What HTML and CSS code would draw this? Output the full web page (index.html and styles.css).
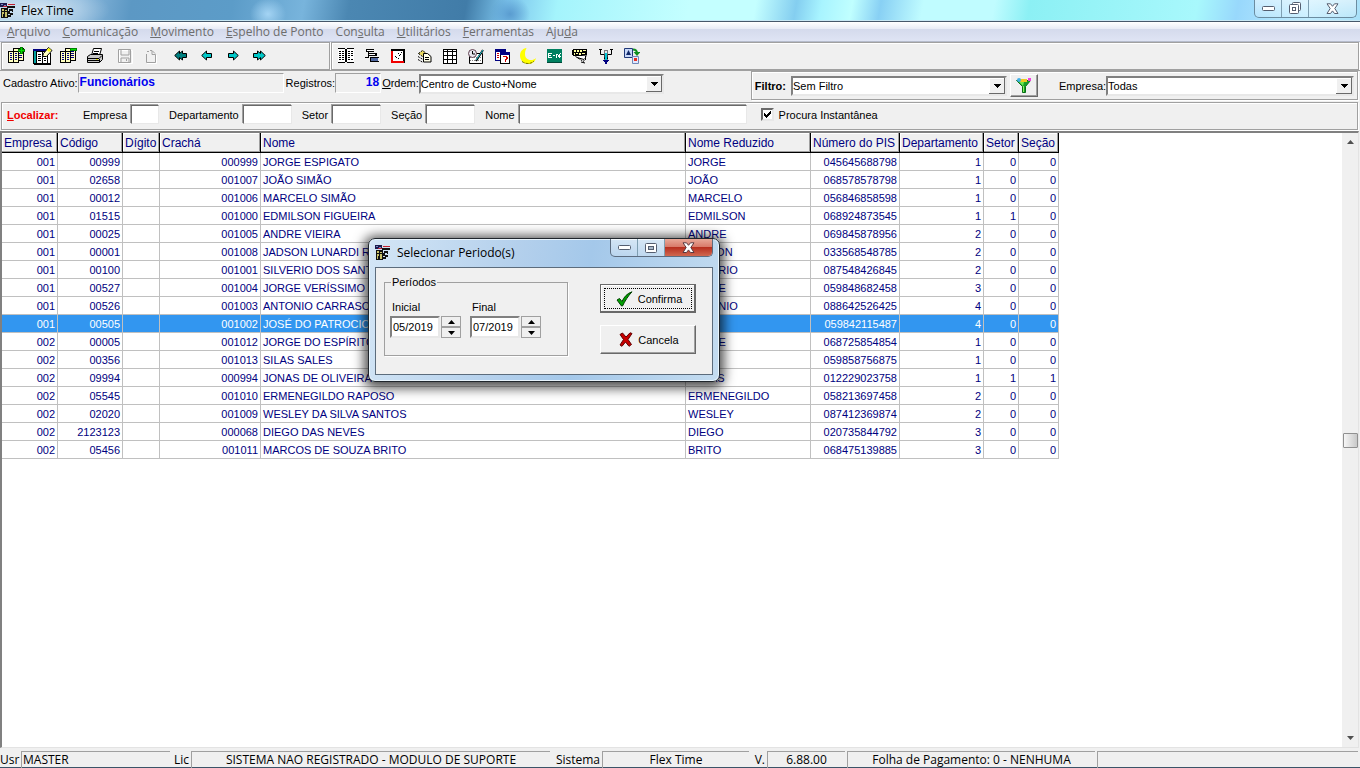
FILE: index.html
```
<!DOCTYPE html>
<html lang="pt-BR">
<head>
    <meta charset="UTF-8">
    <meta name="viewport" content="width=device-width, initial-scale=1.0">
    <title>Flex Time</title>
    <link rel="stylesheet" href="styles.css">
</head>
<body>
    <!-- Shared symbols -->
    <svg class="symbols" width="0" height="0" aria-hidden="true">
        <symbol id="appIcon" viewBox="0 0 16 16">
            <path fill="#1b1b4d" d="M0 0h7v4H0z"/>
            <path fill="#7d88c4" d="M1 1h2v1H1zM4 2h2v1H4z"/>
            <path fill="#d8dce8" d="M7 0h5v5H7z"/>
            <path fill="#c02030" d="M8 1h7v1H8zM3 3h4v1H3z"/>
            <path fill="#111" d="M7 3h8v2H7zM1 5h7v10H1zM9 6h3v2H9zM8 8h2v3H8zM10 10h3v2h-3zM8 12h3v2H8zM12 6h1v3h-1z"/>
            <path fill="#c9c36a" d="M2 6h2v8H2zM5 7h2v7H5z"/>
            <path fill="#111" d="M2 8h5v1H2zM3 11h1v3H3z"/>
        </symbol>
        <symbol id="pages" viewBox="0 0 18 18">
            <path fill="#000" d="M5 1h11v13H5z"/>
            <path fill="#ffffc0" d="M6 2h9v11H6z"/>
            <path fill="#000080" d="M7 4h3v1H7zM11 4h3v1h-3zM11 6h3v1h-3zM11 8h3v1h-3zM11 10h3v1h-3z"/>
            <path fill="#000" d="M0 4h11v12H0z"/>
            <path fill="#ffffc0" d="M1 5h4v10H1zM6 5h4v10H6z"/>
            <path fill="#000080" d="M2 6h2v1H2zM2 8h2v1H2zM2 10h2v1H2zM2 12h2v1H2zM7 6h2v1H7zM7 8h2v1H7zM7 10h2v1H7zM7 12h2v1H7z"/>
        </symbol>
        <symbol id="arrow" viewBox="0 0 12 12">
            <path fill="#00c8c8" stroke="#000" d="M.7 5.500L5.500 1V3.500H10.500V7.500H5.500V10z"/>
        </symbol>
    </svg>

    <div class="titlebar">
        <svg class="app-icon" width="16" height="16"><use href="#appIcon"/></svg>
        <span class="title">Flex Time</span>
        <div class="window-buttons">
            <button type="button" aria-label="Minimizar"><svg width="13" height="6"><rect x=".5" y=".5" width="12" height="4" rx="1" fill="#fff" stroke="#555e70"/></svg></button>
            <button type="button" aria-label="Restaurar"><svg width="13" height="13" fill="#fff" stroke="#555e70"><rect x="3.500" y=".5" width="8" height="8" rx="1"/><rect x=".5" y="2.500" width="9" height="9" rx="1"/><rect x="3.500" y="5.500" width="3" height="3"/></svg></button>
            <button type="button" class="wide" aria-label="Fechar"><svg width="13" height="12"><path fill="#fff" stroke="#555e70" d="M1 .8h3.500l2 2.500 2-2.500H12L8.800 5.500 12 10.500H8.500l-2-2.600-2 2.600H1l3.200-5z"/></svg></button>
        </div>
    </div>

    <nav class="menubar">
        <button type="button"><u>A</u>rquivo</button>
        <button type="button"><u>C</u>omunicação</button>
        <button type="button"><u>M</u>ovimento</button>
        <button type="button"><u>E</u>spelho de Ponto</button>
        <button type="button">Con<u>s</u>ulta</button>
        <button type="button"><u>U</u>tilitários</button>
        <button type="button"><u>F</u>erramentas</button>
        <button type="button">Aju<u>d</u>a</button>
    </nav>

    <div class="toolbars">
        <div class="toolbar toolbar-edit">
            <button type="button" aria-label="Incluir">
                <svg width="18" height="18"><use href="#pages"/><path fill="#008000" d="M12 0h3v7h-3zM10 2h7v3h-7z"/><path fill="#00e000" d="M13 1h1v5h-1zM11 3h5v1h-5z"/></svg>
            </button>
            <button type="button" aria-label="Alterar">
                <svg width="20" height="18" viewBox="0 0 20 18"><path fill="#000" d="M0 2h14v4h4v12H1v-1H0z"/><path fill="#00a0a0" d="M1 4h2v12H1z"/><path fill="#fff" d="M4 5h13v11H4z"/><path fill="#000080" d="M0 2h13v2H0z"/><path fill="#000" d="M5 7h3v1H5zM5 9h3v1H5zM5 11h3v1H5zM5 13h3v1H5zM9 5h1v11H9zM11 11h2v1h-2zM11 13h2v1h-2zM14 5h1v11h-1z"/><path fill="#ffffc0" stroke="#000" d="M9.500 9.500l1-3 5-6 3.500 3-5.500 6z"/><path fill="#ff0" d="M14 3l2-2 2 2-2 2z"/></svg>
            </button>
            <button type="button" aria-label="Excluir">
                <svg width="18" height="18"><use href="#pages"/><path fill="#008000" d="M10 1h7v3h-7z"/><path fill="#00e000" d="M11 2h5v1h-5z"/></svg>
            </button>
            <button type="button" aria-label="Imprimir">
                <svg width="18" height="16" viewBox="0 0 18 16"><path fill="#fff" stroke="#000" d="M5.500 7.500l2-7h8l-2 7z"/><path stroke="#000" d="M8 3.500h5M7 5.500h5"/><path fill="#c8c8c8" stroke="#000" d="M1.500 8.500l3-2h12v5l-3 3h-12z"/><path fill="none" stroke="#000" d="M2 10.500h11l3-3M13.500 11v3M2 12.500h11"/><path fill="#e0e000" d="M10 11h2v1h-2z"/></svg>
            </button>
            <button type="button" class="group-start" aria-label="Salvar" disabled>
                <svg width="16" height="16"><path fill="none" stroke="#fff" d="M2.500 2.500h13v13h-13z"/><path fill="none" stroke="#a0a0a0" d="M1.500 1.500h12v13h-12zM4 2v5h8V2M4 14v-4h8v4M9.500 11v2"/></svg>
            </button>
            <button type="button" aria-label="Cancelar" disabled>
                <svg width="16" height="16"><path fill="none" stroke="#fff" d="M4 15.500h9.500V7"/><path fill="none" stroke="#a0a0a0" d="M3.500 6v8.500h9V6.500H9V3M4 3.500h2M7 2.500h2l3 3"/></svg>
            </button>
            <button type="button" class="group-start" aria-label="Primeiro">
                <svg width="14" height="12"><path fill="#008080" stroke="#000" d="M.7 5.500L5.500 1V3.500L8.500 1V3.500H12.500V7.500H8.500V10L5.500 7.500V10z"/></svg>
            </button>
            <button type="button" aria-label="Anterior">
                <svg width="12" height="12"><use href="#arrow"/></svg>
            </button>
            <button type="button" aria-label="Próximo">
                <svg class="flip" width="12" height="12"><use href="#arrow"/></svg>
            </button>
            <button type="button" aria-label="Último">
                <svg class="flip" width="14" height="12"><path fill="#00c8c8" stroke="#000" d="M.7 5.500L5.500 1V3.500L8.500 1V3.500H12.500V7.500H8.500V10L5.500 7.500V10z"/></svg>
            </button>
        </div>
        <div class="toolbar toolbar-main">
            <button type="button" aria-label="Espelho">
                <svg width="16" height="16"><path fill="#fff" d="M0 1h16v13H0z"/><path fill="#000" d="M0 0h7v1H0zM9 0h7v1H9zM7 1h2v13H7zM0 14h7v1H0zM9 14h7v1H9zM1 3h2v1H1zM4 3h2v1H4zM1 5h2v1H1zM4 5h2v1H4zM1 7h2v1H1zM4 7h2v1H4zM1 9h2v1H1zM4 9h2v1H4zM1 11h2v1H1zM4 11h2v1H4zM10 3h2v1h-2zM13 3h2v1h-2zM10 5h2v1h-2zM13 5h2v1h-2zM10 7h2v1h-2zM13 7h2v1h-2zM10 9h2v1h-2zM10 11h2v1h-2zM13 11h2v1h-2z"/></svg>
            </button>
            <button type="button" aria-label="Hierarquia">
                <svg width="14" height="14"><path fill="#000" d="M1 0h8v1H1zM3 1h1v8H3zM1 1h1v2H1zM1 2h8v1H1zM4 4h7v1H4zM4 6h8v1H4zM10 4h2v3h-2zM5 8h9v1H5zM5 12h9v1H5zM5 8h1v5H5zM0 8h4v1H0z"/><path fill="#fff" d="M2 1h6v1H2zM5 5h5v1H5z"/><path fill="#5068a0" d="M6 9h7v3H6z"/></svg>
            </button>
            <button type="button" aria-label="Relógio">
                <svg width="14" height="14"><path fill="#000" d="M0 0h14v14H0z"/><path fill="#f00000" d="M0 2h2v12H0zM1 12h12v2H1z"/><path fill="#fff" d="M2 2h10v10H2z"/><path fill="#000" d="M4 7h1v1H4zM5 8h1v1H5zM7 4h1v1H7zM8 6h1v1H8zM9 5h1v1H9zM10 3h1v1h-1zM7 9h1v1H7z"/></svg>
            </button>
            <button type="button" aria-label="Lançamentos">
                <svg width="15" height="14"><path fill="#e8d860" stroke="#000" stroke-dasharray="2 1" d="M1.500 4.500l4-3 4 3-4 3z"/><path fill="none" stroke="#000" stroke-dasharray="2 1" d="M1 7.500l5 3M1 10.500l5 3"/><path fill="#ffffe8" stroke="#000" d="M6.500 4.500h4l3.500 3v5.500H6.500z"/><path stroke="#000" d="M8 8.500h4M8 10.500h4"/></svg>
            </button>
            <button type="button" aria-label="Escalas">
                <svg width="14" height="15"><path fill="#000" d="M0 0h14v15H0z"/><path fill="#fff" d="M1 1h3v1H1zM5 1h4v1H5zM10 1h3v1h-3zM1 3h3v3H1zM5 3h4v3H5zM10 3h3v3h-3zM1 7h3v3H1zM5 7h4v3H5zM10 7h3v3h-3zM1 11h3v3H1zM5 11h4v3H5zM10 11h3v3h-3z"/></svg>
            </button>
            <button type="button" aria-label="Horários">
                <svg width="16" height="15"><path fill="#fff" stroke="#000" d="M1.500 4.500h13v10h-13z"/><path stroke="#808080" stroke-dasharray="1 1" d="M2 8.500h12M2 11.500h12"/><circle cx="4.500" cy="4.500" r="4" fill="#e8e8f0" stroke="#604050"/><path fill="none" stroke="#000" d="M4.500 2v3H7"/><path stroke="#000" stroke-width="2" d="M8 12l7-11"/><path stroke="#20c0d0" d="M8 11l7-10"/></svg>
            </button>
            <button type="button" aria-label="Calendário">
                <svg width="15" height="15"><path fill="#000080" d="M0 0h11v12H0z"/><path fill="#fff" d="M1 3h9v8H1z"/><path fill="#d00000" d="M2 4h2v1H2zM2 6h2v1H2zM2 8h2v1H2z"/><path fill="#000" d="M5 3h10v12H5z"/><path fill="#000080" d="M5 3h10v3H5z"/><path fill="#fff" d="M6 6h8v8H6z"/><path fill="#d00000" d="M8 7h4v1h1v2h-1v1h-1v1h-1v-2h1V8H8zM10 12h1v1h-1z"/></svg>
            </button>
            <button type="button" aria-label="Noturno">
                <svg width="16" height="16"><path fill="#ff0" d="M6 0C2 1 0 4 0 7.500 0 12 3.500 16 8 16c4 0 7-2 8-6-1.500 1.500-3 2-5 2-4 0-6-2.500-6-6 0-2.500.5-4.500 1.500-5.500z"/><path fill="none" stroke="#707000" stroke-dasharray="3 1" d="M2 13.500c4 3 9 2.500 12-.5"/></svg>
            </button>
            <button type="button" aria-label="Eventos">
                <svg width="15" height="14"><path fill="#008060" d="M0 0h15v14H0z"/><path fill="#fff" d="M1 4h4v1H2v1h2v1H2v1h3v1H1zM6 6h2v1H6zM9 5h1v4H9zM10 5h1v1h-1zM11 6h1v2h-1zM13 4h1v1h-1v2h1v1h-1v1h-1V5h1z"/><path fill="#004838" d="M0 13h15v1H0z"/></svg>
            </button>
            <button type="button" aria-label="Coletor">
                <svg width="16" height="15"><path fill="#000" d="M1 0h14v6h-1v1H1V6H0V1h1z"/><path fill="#ffffa0" d="M2 1h2v2H2zM5 1h2v2H5zM8 1h2v2H8zM11 1h3v1h-3zM2 4h1v2H2zM4 4h2v1H4zM7 4h2v2H7zM10 4h3v1h-3z"/><path fill="#fff" stroke="#000" stroke-dasharray="2 1" d="M3.500 7.500l8 5 3-6"/><path fill="none" stroke="#000" d="M5 8.500l7 2M9 13l4 1M13.500 7v4"/></svg>
            </button>
            <button type="button" aria-label="Importar">
                <svg width="14" height="15"><path fill="none" stroke="#000" d="M1.500 0v5.500h4v5M12.500 0v5.500h-4v5M0 .5h3M11 .5h3"/><path fill="#e0e8f0" stroke="#000" stroke-dasharray="1 1" d="M5.500 1.500h3v7h-3z"/><path fill="#00c8d8" d="M6 4h2v7H6z"/><path fill="#000080" d="M4 11h6v1H9v1H8v2H6v-2H5v-1H4z"/></svg>
            </button>
            <button type="button" aria-label="Converter">
                <svg width="16" height="16"><path fill="#c8d8f8" stroke="#203878" d="M.5 .5h8v9h-8z"/><path fill="#102868" d="M2 7l2.500-5L7 7z"/><path fill="none" stroke="#109020" stroke-width="2" d="M9 1.500c3 0 4 1 4 4"/><path fill="#109020" d="M9.500 4h7L13 8z"/><path fill="#e0e8ff" stroke="#7088b8" d="M8.500 8.500h6v7h-6z"/><path fill="#e83020" d="M10 10h3v3h-3z"/></svg>
            </button>
        </div>
    </div>

    <div class="register-bar">
        <span>Cadastro Ativo:</span>
        <output class="sunken register-name">Funcionários</output>
        <span>Registros:</span>
        <output class="sunken register-count">18</output>
        <label for="ordem"><u>O</u>rdem:</label>
        <select id="ordem" class="combo combo-order">
            <option>Centro de Custo+Nome</option>
        </select>
        <div class="filter-panel">
            <label for="filtro"><b>Filtro:</b></label>
            <select id="filtro" class="combo combo-filter">
                <option>Sem Filtro</option>
            </select>
            <button type="button" class="filter-btn" aria-label="Aplicar filtro">
                <svg width="18" height="17"><path fill="#18a028" stroke="#087018" d="M1.500 3.500h14l-5 6v6h-3v-6z"/><path fill="#70e850" d="M4 5h5l-1 4z"/><path fill="#f0c820" d="M5 2h7v3H5z"/><circle cx="4" cy="3" r="2" fill="#40b0e8"/><path fill="#f040e0" d="M13 1h3v3h-3z"/><path fill="#90f060" d="M8 9h1v6H8z"/></svg>
            </button>
            <label for="empresaFiltro" class="company-label">Empresa:</label>
            <select id="empresaFiltro" class="combo combo-company">
                <option>Todas</option>
            </select>
        </div>
    </div>

    <form class="search-bar">
        <span class="search-title"><u>L</u>ocalizar:</span>
        <div class="field"><label for="empresa">Empresa</label><input type="text" id="empresa" class="w-sm"></div>
        <div class="field"><label for="departamento">Departamento</label><input type="text" id="departamento"></div>
        <div class="field"><label for="setor">Setor</label><input type="text" id="setor"></div>
        <div class="field"><label for="secao">Seção</label><input type="text" id="secao"></div>
        <div class="field"><label for="nome">Nome</label><input type="text" id="nome" class="w-lg"></div>
        <label class="check"><input type="checkbox" checked> Procura Instantânea</label>
    </form>

    <main class="grid">
        <div class="grid-body">
            <table>
                <colgroup>
                    <col class="c-empresa"><col class="c-codigo"><col class="c-digito"><col class="c-cracha"><col class="c-nome">
                    <col class="c-reduzido"><col class="c-pis"><col class="c-depto"><col class="c-setor"><col class="c-secao">
                </colgroup>
                <thead>
                    <tr><th>Empresa</th><th>Código</th><th>Dígito</th><th>Crachá</th><th>Nome</th><th>Nome Reduzido</th><th>Número do PIS</th><th>Departamento</th><th>Setor</th><th>Seção</th></tr>
                </thead>
                <tbody>
                    <tr><td>001</td><td>00999</td><td></td><td>000999</td><td>JORGE ESPIGATO</td><td>JORGE</td><td>045645688798</td><td>1</td><td>0</td><td>0</td></tr>
                    <tr><td>001</td><td>02658</td><td></td><td>001007</td><td>JOÃO SIMÃO</td><td>JOÃO</td><td>068578578798</td><td>1</td><td>0</td><td>0</td></tr>
                    <tr><td>001</td><td>00012</td><td></td><td>001006</td><td>MARCELO SIMÃO</td><td>MARCELO</td><td>056846858598</td><td>1</td><td>0</td><td>0</td></tr>
                    <tr><td>001</td><td>01515</td><td></td><td>001000</td><td>EDMILSON FIGUEIRA</td><td>EDMILSON</td><td>068924873545</td><td>1</td><td>1</td><td>0</td></tr>
                    <tr><td>001</td><td>00025</td><td></td><td>001005</td><td>ANDRE VIEIRA</td><td>ANDRE</td><td>069845878956</td><td>2</td><td>0</td><td>0</td></tr>
                    <tr><td>001</td><td>00001</td><td></td><td>001008</td><td>JADSON LUNARDI R</td><td>JADSON</td><td>033568548785</td><td>2</td><td>0</td><td>0</td></tr>
                    <tr><td>001</td><td>00100</td><td></td><td>001001</td><td>SILVERIO DOS SANTOS</td><td>SILVERIO</td><td>087548426845</td><td>2</td><td>0</td><td>0</td></tr>
                    <tr><td>001</td><td>00527</td><td></td><td>001004</td><td>JORGE VERÍSSIMO D</td><td>JORGE</td><td>059848682458</td><td>3</td><td>0</td><td>0</td></tr>
                    <tr><td>001</td><td>00526</td><td></td><td>001003</td><td>ANTONIO CARRASCO</td><td>ANTONIO</td><td>088642526425</td><td>4</td><td>0</td><td>0</td></tr>
                    <tr class="selected"><td>001</td><td>00505</td><td></td><td>001002</td><td>JOSÉ DO PATROCIO</td><td>JOSÉ</td><td>059842115487</td><td>4</td><td>0</td><td>0</td></tr>
                    <tr><td>002</td><td>00005</td><td></td><td>001012</td><td>JORGE DO ESPÍRITO</td><td>JORGE</td><td>068725854854</td><td>1</td><td>0</td><td>0</td></tr>
                    <tr><td>002</td><td>00356</td><td></td><td>001013</td><td>SILAS SALES</td><td>SILAS</td><td>059858756875</td><td>1</td><td>0</td><td>0</td></tr>
                    <tr><td>002</td><td>09994</td><td></td><td>000994</td><td>JONAS DE OLIVEIRA</td><td>JONAS</td><td>012229023758</td><td>1</td><td>1</td><td>1</td></tr>
                    <tr><td>002</td><td>05545</td><td></td><td>001010</td><td>ERMENEGILDO RAPOSO</td><td>ERMENEGILDO</td><td>058213697458</td><td>2</td><td>0</td><td>0</td></tr>
                    <tr><td>002</td><td>02020</td><td></td><td>001009</td><td>WESLEY DA SILVA SANTOS</td><td>WESLEY</td><td>087412369874</td><td>2</td><td>0</td><td>0</td></tr>
                    <tr><td>002</td><td>2123123</td><td></td><td>000068</td><td>DIEGO DAS NEVES</td><td>DIEGO</td><td>020735844792</td><td>3</td><td>0</td><td>0</td></tr>
                    <tr><td>002</td><td>05456</td><td></td><td>001011</td><td>MARCOS DE SOUZA BRITO</td><td>BRITO</td><td>068475139885</td><td>3</td><td>0</td><td>0</td></tr>
                </tbody>
            </table>
        </div>
        <div class="scrollbar">
            <button type="button" aria-label="Rolar para cima"><svg width="7" height="4"><path fill="#505050" d="M0 4l3.500-4L7 4z"/></svg></button>
            <div class="thumb"></div>
            <button type="button" aria-label="Rolar para baixo"><svg width="7" height="4"><path fill="#505050" d="M0 0l3.500 4L7 0z"/></svg></button>
        </div>
    </main>

    <footer class="statusbar">
        <span class="name">Usr</span><span class="cell left">MASTER</span>
        <span class="name">Lic</span><span class="cell">SISTEMA NAO REGISTRADO - MODULO DE SUPORTE</span>
        <span class="name">Sistema</span><span class="cell">Flex Time</span>
        <span class="name">V.</span><span class="cell">6.88.00</span>
        <span class="cell">Folha de Pagamento: 0 - NENHUMA</span>
        <span class="cell"></span>
    </footer>

    <!-- Period dialog -->
    <div class="dialog" role="dialog" aria-labelledby="dialogTitle">
        <div class="dialog-title">
            <svg class="app-icon" width="16" height="16"><use href="#appIcon"/></svg>
            <span id="dialogTitle">Selecionar Periodo(s)</span>
            <div class="window-buttons">
                <button type="button" aria-label="Minimizar"><svg width="13" height="6"><rect x=".5" y=".5" width="12" height="4" rx="1" fill="#fff" stroke="#555e70"/></svg></button>
                <button type="button" aria-label="Maximizar"><svg width="12" height="10" fill="#fff" stroke="#555e70"><rect x=".5" y=".5" width="11" height="9" rx="1"/><rect x="3.500" y="3.500" width="5" height="3" fill="#a8b8c8"/></svg></button>
                <button type="button" class="wide close" aria-label="Fechar"><svg width="13" height="12"><path fill="#fff" stroke="#5a3a40" d="M1 .8h3.500l2 2.500 2-2.500H12L8.800 5.500 12 10.500H8.500l-2-2.600-2 2.600H1l3.200-5z"/></svg></button>
            </div>
        </div>
        <form class="dialog-body">
            <fieldset>
                <legend>Períodos</legend>
                <div class="period">
                    <label for="inicial">Inicial</label>
                    <div class="spin">
                        <input type="text" id="inicial" value="05/2019">
                        <div class="spin-buttons">
                            <button type="button" aria-label="Aumentar"><svg width="7" height="4"><path d="M0 4l3.500-4L7 4z"/></svg></button>
                            <button type="button" aria-label="Diminuir"><svg width="7" height="4"><path d="M0 0l3.500 4L7 0z"/></svg></button>
                        </div>
                    </div>
                </div>
                <div class="period">
                    <label for="final">Final</label>
                    <div class="spin">
                        <input type="text" id="final" value="07/2019">
                        <div class="spin-buttons">
                            <button type="button" aria-label="Aumentar"><svg width="7" height="4"><path d="M0 4l3.500-4L7 4z"/></svg></button>
                            <button type="button" aria-label="Diminuir"><svg width="7" height="4"><path d="M0 0l3.500 4L7 0z"/></svg></button>
                        </div>
                    </div>
                </div>
            </fieldset>
            <div class="actions">
                <button type="button" class="action default">
                    <svg width="17" height="16"><path fill="#00a000" stroke="#004000" d="M1 9l2.500-1.500 2.500 3C8 6 11 2.500 16 .8 12 5 9 10 6.500 15H5.500z"/></svg>
                    Confirma
                </button>
                <button type="button" class="action">
                    <svg width="14" height="15"><path fill="#c80000" stroke="#600000" d="M1 2.500L3.500 1 7 5l4-4.200 2 .7-4 6 3.500 5-2.500 1.800L6.500 10l-3.500 4.300-2-1.300 3.500-5.500z"/></svg>
                    Cancela
                </button>
            </div>
        </form>
    </div>
</body>
</html>
```
FILE: styles.css
```
* {
    box-sizing: border-box;
}

body {
    margin: 0;
    height: 100vh;
    display: flex;
    flex-direction: column;
    overflow: hidden;
    background-color: #f0f0f0;
    color: #000;
    font-family: "Liberation Sans", Arial, sans-serif;
    font-size: 11px;
    line-height: 14px;
}

button, input, select {
    margin: 0;
    padding: 0;
    border: none;
    border-radius: 0;
    background: none;
    color: inherit;
    font: inherit;
}

svg {
    display: block;
    flex: none;
}

.symbols {
    position: absolute;
}

/* Title bar */
.titlebar {
    display: flex;
    align-items: center;
    height: 22px;
    border-bottom: 1px solid #46586a;
    box-shadow: inset 0 -1px #c8e8f4;
    background:
        radial-gradient(ellipse 70px 24px at 40px 10px, rgba(255,255,255,0.6), transparent),
        radial-gradient(ellipse 18px 16px at 268px 14px, #a4d4f4, transparent),
        radial-gradient(ellipse 20px 18px at 510px 14px, #5a9cd0, transparent),
        linear-gradient(100deg, #a9cbe6 0, #8ab8dc 80px, #5c98c4 130px, #5c9cc8 230px, #78b4dc 300px, #4b87b2 345px, #417ca8 460px, #7cc4ec 500px, #a4f4fc 550px, #c4ffff 680px, #c4ffff 745px, #84cef0 785px, #a8f4ff 810px, #c0ffff 840px, #88d0f4 868px, #c0fcff 910px, #c0fcff 980px, #8cf0f4 1015px, #a8f8fc 1180px, #98d8fc 1220px, #c0ecff 1290px, #a8e0f8 100%);
}

.app-icon {
    shape-rendering: crispEdges;
}

.title, .dialog-title {
    font-family: "Open Sans", "Noto Sans", sans-serif;
    font-size: 12px;
}

.title {
    flex: 1;
    margin-left: 5px;
}

.window-buttons {
    display: flex;
    align-self: flex-start;
    height: 18px;
    border: 1px solid #6b8ca0;
    border-top: none;
    border-radius: 0 0 5px 5px;
    overflow: hidden;
    background: linear-gradient(rgba(255,255,255,0.5), rgba(255,255,255,0.2));
}

.titlebar .window-buttons {
    margin-right: 3px;
}

.window-buttons button {
    display: flex;
    align-items: center;
    justify-content: center;
    width: 27px;
    border-right: 1px solid #7f9fb2;
}

.window-buttons .wide {
    width: 47px;
    border-right: none;
}

/* Menu */
.menubar {
    display: flex;
    height: 20px;
    padding-left: 1px;
    border-bottom: 1px solid #b6bccc;
    background: linear-gradient(#fff, #e8ecf6 35%, #d4daec 36%, #dfe4f4);
}

.menubar button {
    padding: 0 6px;
    color: #6d6d6d;
    font-family: "Open Sans", "Noto Sans", sans-serif;
    font-size: 12px;
    line-height: 18px;
}

/* Toolbars */
.toolbars {
    display: flex;
    height: 28px;
    gap: 1px;
    padding: 0 1px;
}

.toolbar {
    display: flex;
    align-items: center;
    border: 1px solid #a0a0a0;
    box-shadow: inset 1px 1px #fff, 1px 1px #fff;
}

.toolbar button {
    display: flex;
    align-items: center;
    justify-content: center;
    width: 26px;
    height: 24px;
}

.toolbar .group-start {
    margin-left: 4px;
}

.toolbar-edit {
    width: 329px;
    padding-left: 2px;
}

.toolbar-main {
    flex: 1;
    padding-left: 1px;
}

.flip {
    transform: scaleX(-1);
}

/* Register bar */
.register-bar {
    display: flex;
    align-items: flex-start;
    height: 31px;
    padding: 0 2px 0 3px;
    border-top: 1px solid #a0a0a0;
}

.register-bar > span, .register-bar > label {
    padding-top: 5px;
    white-space: nowrap;
}

.sunken {
    height: 20px;
    padding: 0 1px;
    border: 1px solid;
    border-color: #a0a0a0 #fff #fff #a0a0a0;
    color: #0000f0;
    font-size: 12px;
    font-weight: bold;
    line-height: 16px;
}

.register-name {
    width: 206px;
    margin: 2px 2px 0 0;
}

.register-count {
    width: 46px;
    margin: 2px 1px 0 0;
    text-align: right;
}

.combo {
    appearance: none;
    height: 20px;
    padding: 0 20px 0 0;
    border: 2px solid;
    border-color: #808080 #e8e8e8 #e8e8e8 #808080;
    background: #fff url("data:image/svg+xml,%3Csvg xmlns='http://www.w3.org/2000/svg' width='16' height='16' shape-rendering='crispEdges'%3E%3Cpath fill='%23696969' d='M0 0h16v16H0z'/%3E%3Cpath fill='%23fff' d='M0 0h15v15H0z'/%3E%3Cpath fill='%23f0f0f0' d='M1 1h14v14H1z'/%3E%3Cpath d='M5 6h7v1H5zM6 7h5v1H6zM7 8h3v1H7zM8 9h1v1H8z'/%3E%3C/svg%3E") no-repeat right center;
}

.combo-order {
    width: 245px;
    margin-top: 3px;
}

.filter-panel {
    flex: 1;
    display: flex;
    align-items: center;
    height: 29px;
    margin-left: 87px;
    padding: 0 3px;
    border: 1px solid #a0a0a0;
    box-shadow: inset 1px 1px #fff, 1px 1px #fff;
}

.filter-panel label {
    white-space: nowrap;
}

.combo-filter {
    width: 216px;
    margin-left: 5px;
}

.filter-btn {
    display: flex;
    align-items: center;
    justify-content: center;
    width: 28px;
    height: 23px;
    margin-left: 3px;
    border: 1px solid;
    border-color: #fff #696969 #696969 #fff;
    box-shadow: inset -1px -1px #a0a0a0;
}

.company-label {
    margin-left: 21px;
}

.combo-company {
    flex: 1;
}

/* Search bar */
.search-bar {
    display: flex;
    align-items: center;
    gap: 10px;
    height: 28px;
    margin: 1px 2px 0 1px;
    padding: 0 5px 3px;
    border: 1px solid #a0a0a0;
    box-shadow: inset 1px 1px #fff, 1px 1px #fff;
}

.search-title {
    width: 66px;
    color: #f00000;
    font-weight: bold;
}

.field {
    display: flex;
    align-items: center;
    gap: 4px;
}

.field input {
    width: 49px;
    height: 19px;
    padding: 0 2px;
    border: 1px solid;
    border-color: #696969 #e8e8e8 #e8e8e8 #696969;
    box-shadow: -1px -1px #a0a0a0;
    background-color: #fff;
}

.field .w-sm {
    width: 28px;
}

.field .w-lg {
    width: 228px;
}

.check {
    display: flex;
    align-items: center;
    gap: 5px;
    margin-left: 4px;
}

.check input {
    appearance: none;
    width: 13px;
    height: 13px;
    border: 2px solid;
    border-color: #696969 #e8e8e8 #e8e8e8 #696969;
    background: #fff url("data:image/svg+xml,%3Csvg xmlns='http://www.w3.org/2000/svg' width='9' height='9' shape-rendering='crispEdges'%3E%3Cpath d='M1 3h1v1h1v1h1V4h1V3h1V2h1V1h1v3H7v1H6v1H5v1H4v1H3V7H2V6H1z'/%3E%3C/svg%3E") no-repeat center;
}

/* Data grid */
.grid {
    flex: 1;
    display: flex;
    min-height: 0;
    margin-top: 1px;
    margin-right: 1px;
    border: 1px solid;
    border-width: 2px 1px 1px 2px;
    border-color: #808080 #e3e3e3 #e3e3e3 #808080;
    background-color: #fff;
}

.grid-body {
    flex: 1;
    overflow: hidden;
}

table {
    table-layout: fixed;
    width: 1057px;
    border-collapse: separate;
    border-spacing: 0;
    color: #000080;
}

.c-empresa { width: 56px; }
.c-codigo { width: 65px; }
.c-digito { width: 37px; }
.c-cracha { width: 101px; }
.c-nome { width: 425px; }
.c-reduzido { width: 125px; }
.c-pis { width: 89px; }
.c-depto { width: 84px; }
.c-setor { width: 35px; }
.c-secao { width: 40px; }

th {
    height: 20px;
    padding: 0 0 0 2px;
    border-right: 1px solid #000;
    border-bottom: 1px solid #000;
    box-shadow: inset -1px -1px #a0a0a0, inset 1px 1px #fff;
    background-color: #f0f0f0;
    font-size: 12px;
    font-weight: normal;
    text-align: left;
    white-space: nowrap;
}

td {
    height: 18px;
    padding: 0 2px;
    border-right: 1px solid #c0c0c0;
    border-bottom: 1px solid #c0c0c0;
    text-align: right;
    white-space: nowrap;
}

td:nth-child(5), td:nth-child(6) {
    text-align: left;
}

.selected td {
    background-color: #3296f0;
    color: #fff;
}

.scrollbar {
    display: flex;
    flex-direction: column;
    justify-content: space-between;
    align-items: center;
    width: 16px;
    background-color: #f0f0f0;
}

.scrollbar button {
    display: flex;
    align-items: center;
    justify-content: center;
    width: 16px;
    height: 18px;
}

.thumb {
    width: 15px;
    height: 15px;
    border: 1px solid #909090;
    border-radius: 1px;
    background: linear-gradient(90deg, #f6f6f6, #c8c8c8);
}

/* Status bar */
.statusbar {
    display: grid;
    grid-template-columns: 19px 149px 17px 359px 48px 147px 14px 78px 248px 1fr;
    column-gap: 2px;
    height: 20px;
    padding: 3px 2px 0 0;
    border-bottom: 1px solid #3c5468;
    font-family: "Open Sans", "Noto Sans", sans-serif;
    font-size: 12px;
    line-height: 16px;
    white-space: nowrap;
}

.name {
    padding-top: 1px;
    text-align: right;
}

.cell {
    border-top: 1px solid #a0a0a0;
    border-left: 1px solid #a0a0a0;
    text-align: center;
}

.cell.left {
    padding-left: 1px;
    text-align: left;
}

/* Dialog */
.dialog {
    position: absolute;
    left: 368px;
    top: 238px;
    width: 352px;
    padding: 0 6px 6px;
    border: 1px solid #20262c;
    border-radius: 7px;
    background: linear-gradient(100deg, #d4e6f6, #b4d0ec 40%, #a4c8ea 60%, #c4dcf0);
    box-shadow: inset 0 0 0 1px #e8f4fc, 0 2px 12px 4px rgba(0,0,0,0.7);
}

.dialog-title {
    display: flex;
    align-items: center;
    height: 28px;
}

.dialog-title span {
    flex: 1;
    margin-left: 6px;
}

.dialog .window-buttons {
    border-color: #5c6c80;
}

.window-buttons .close {
    background: linear-gradient(#e8a898, #d87868 48%, #b83020 50%, #d06850);
}

.dialog-body {
    display: flex;
    align-items: flex-start;
    justify-content: space-between;
    height: 108px;
    padding: 7px 16px 0 8px;
    border: 1px solid #5c6c7c;
    background-color: #f0f0f0;
}

fieldset {
    display: flex;
    gap: 9px;
    width: 184px;
    height: 81px;
    margin: 0;
    padding: 11px 5px 0;
    border: 1px solid #a0a0a0;
    box-shadow: 1px 1px #fff;
}

legend {
    margin-left: 1px;
    padding: 0 1px;
}

.period label {
    padding-left: 2px;
}

.spin {
    display: flex;
    gap: 1px;
    margin-top: 2px;
}

.spin input {
    width: 50px;
    height: 22px;
    padding: 0 1px;
    border: 2px solid;
    border-color: #808080 #e8e8e8 #e8e8e8 #808080;
    background-color: #fff;
}

.spin-buttons button {
    display: flex;
    align-items: center;
    justify-content: center;
    width: 20px;
    height: 11px;
    border: 1px solid;
    border-color: #fff #696969 #696969 #fff;
    outline: 1px solid #a0a0a0;
    outline-offset: -1px;
    background-color: #f0f0f0;
}

.actions {
    display: flex;
    flex-direction: column;
    gap: 12px;
    padding-top: 9px;
}

.action {
    display: flex;
    align-items: center;
    justify-content: center;
    gap: 5px;
    width: 96px;
    height: 29px;
    padding-left: 2px;
    border: 1px solid;
    border-color: #fff #696969 #696969 #fff;
    box-shadow: inset -1px -1px #a0a0a0;
}

.action.default {
    border-color: #696969;
    box-shadow: inset -1px -1px #696969, inset 1px 1px #fff;
    outline: 1px dotted #000;
    outline-offset: -5px;
}
```
